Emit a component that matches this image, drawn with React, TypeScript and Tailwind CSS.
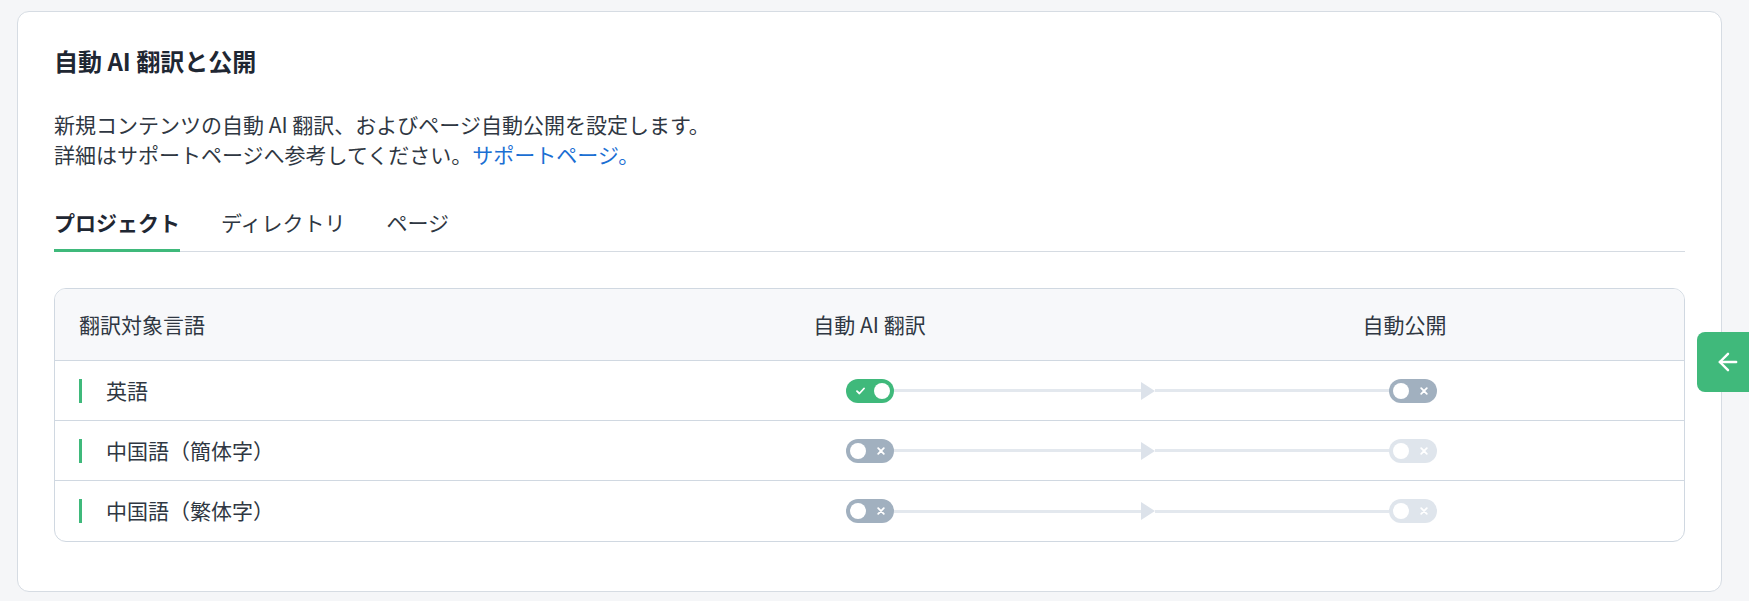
import { ArrowLeft } from 'lucide-react'

const FONT = { fontFamily: '"Noto Sans CJK JP", "Noto Sans", sans-serif' }

type ToggleKind = 'on' | 'off' | 'disabled'

/** Pill switch — knob right when on (check on the left), knob left otherwise. */
function Toggle({ kind }: { kind: ToggleKind }) {
  const bg = kind === 'on' ? 'bg-[#3fb97b]' : kind === 'off' ? 'bg-[#a1b0bf]' : 'bg-[#dfe5ec]'
  return (
    <div className={`relative h-6 w-12 shrink-0 rounded-full ${bg}`}>
      {kind === 'on' ? (
        <>
          <svg className="absolute left-[10px] top-[8px]" width="9" height="8" viewBox="0 0 9 8" fill="none">
            <path d="M1 4.2 3.4 6.5 8 1.5" stroke="white" strokeWidth="1.8" strokeLinecap="round" strokeLinejoin="round" />
          </svg>
          <span className="absolute right-[4px] top-[4px] h-4 w-4 rounded-full bg-white" />
        </>
      ) : (
        <>
          <span className="absolute left-[4px] top-[4px] h-4 w-4 rounded-full bg-white" />
          <svg className="absolute right-[9px] top-[8px]" width="8" height="8" viewBox="0 0 8 8" fill="none">
            <path d="M1.2 1.2 6.8 6.8M6.8 1.2 1.2 6.8" stroke="white" strokeWidth="1.8" strokeLinecap="round" />
          </svg>
        </>
      )}
    </div>
  )
}

const ROWS: { lang: string; ai: ToggleKind; publish: ToggleKind }[] = [
  { lang: '英語', ai: 'on', publish: 'off' },
  { lang: '中国語（簡体字）', ai: 'off', publish: 'disabled' },
  { lang: '中国語（繁体字）', ai: 'off', publish: 'disabled' },
]

export default function App() {
  return (
    <div className="relative min-h-screen bg-[#f5f6f8] pl-[17px] pt-[11px]" style={FONT}>
      <div className="w-[1705px] rounded-xl border border-[#d6dce3] bg-white px-9 pt-[33px] pb-[49px]">
        <h1 className="text-[24px] font-bold leading-8 text-[#1f2733]">自動 AI 翻訳と公開</h1>

        <p className="mt-[32px] text-[21px] leading-[30px] text-[#2f3742]">
          新規コンテンツの自動 AI 翻訳、およびページ自動公開を設定します。
          <br />
          詳細はサポートページへ参考してください。
          <a className="text-[#1b6fd3]" href="#">サポートページ。</a>
        </p>

        {/* tabs */}
        <div className="mt-[38px] flex gap-[41px] border-b border-[#d5dbe2] text-[21px] leading-[30px]">
          <div className="relative pb-[14px] font-bold text-[#1f2733]">
            プロジェクト
            <span className="absolute -bottom-px left-0 right-0 h-[3px] bg-[#3fb97b]" />
          </div>
          <div className="pb-[14px] text-[#2f3742]">ディレクトリ</div>
          <div className="pb-[14px] text-[#2f3742]">ページ</div>
        </div>

        {/* language table */}
        <div className="mt-[36px] overflow-hidden rounded-xl border border-[#d0d8e1] text-[21px] text-[#2f3742]">
          <div className="grid h-[72px] grid-cols-3 items-center border-b border-[#d0d8e1] bg-[#f7f8fa]">
            <div className="pl-6">翻訳対象言語</div>
            <div className="text-center">自動 AI 翻訳</div>
            <div className="pr-4 text-center">自動公開</div>
          </div>
          {ROWS.map((row, i) => (
            <div
              key={row.lang}
              className={`grid h-[60px] grid-cols-3 items-center ${i < ROWS.length - 1 ? 'border-b border-[#d0d8e1]' : ''}`}
            >
              <div className="flex items-center gap-6 pl-6">
                <span className="h-6 w-[3px] bg-[#3fb97b]" />
                <span className="[text-spacing-trim:space-all]">{row.lang}</span>
              </div>
              <div className="flex items-center">
                <div className="flex-1" />
                <Toggle kind={row.ai} />
                <div className="h-[3px] flex-1 bg-[#e3e8ee]" />
              </div>
              <div className="flex items-center">
                <div className="flex flex-1 items-center">
                  <svg width="14" height="18" viewBox="0 0 14 18" className="shrink-0">
                    <path d="M0 0 14 9 0 18Z" fill="#dce2ea" />
                  </svg>
                  <div className="h-[3px] flex-1 bg-[#e3e8ee]" />
                </div>
                <Toggle kind={row.publish} />
                <div className="flex-1" />
              </div>
            </div>
          ))}
        </div>
      </div>

      {/* side drawer handle */}
      <button
        type="button"
        aria-label="Open panel"
        className="absolute left-[1697px] top-[332px] flex h-[60px] w-[60px] items-center rounded-l-lg bg-[#40b97b] pl-[17px] text-white"
      >
        <ArrowLeft size={28} strokeWidth={2.1} />
      </button>
    </div>
  )
}
